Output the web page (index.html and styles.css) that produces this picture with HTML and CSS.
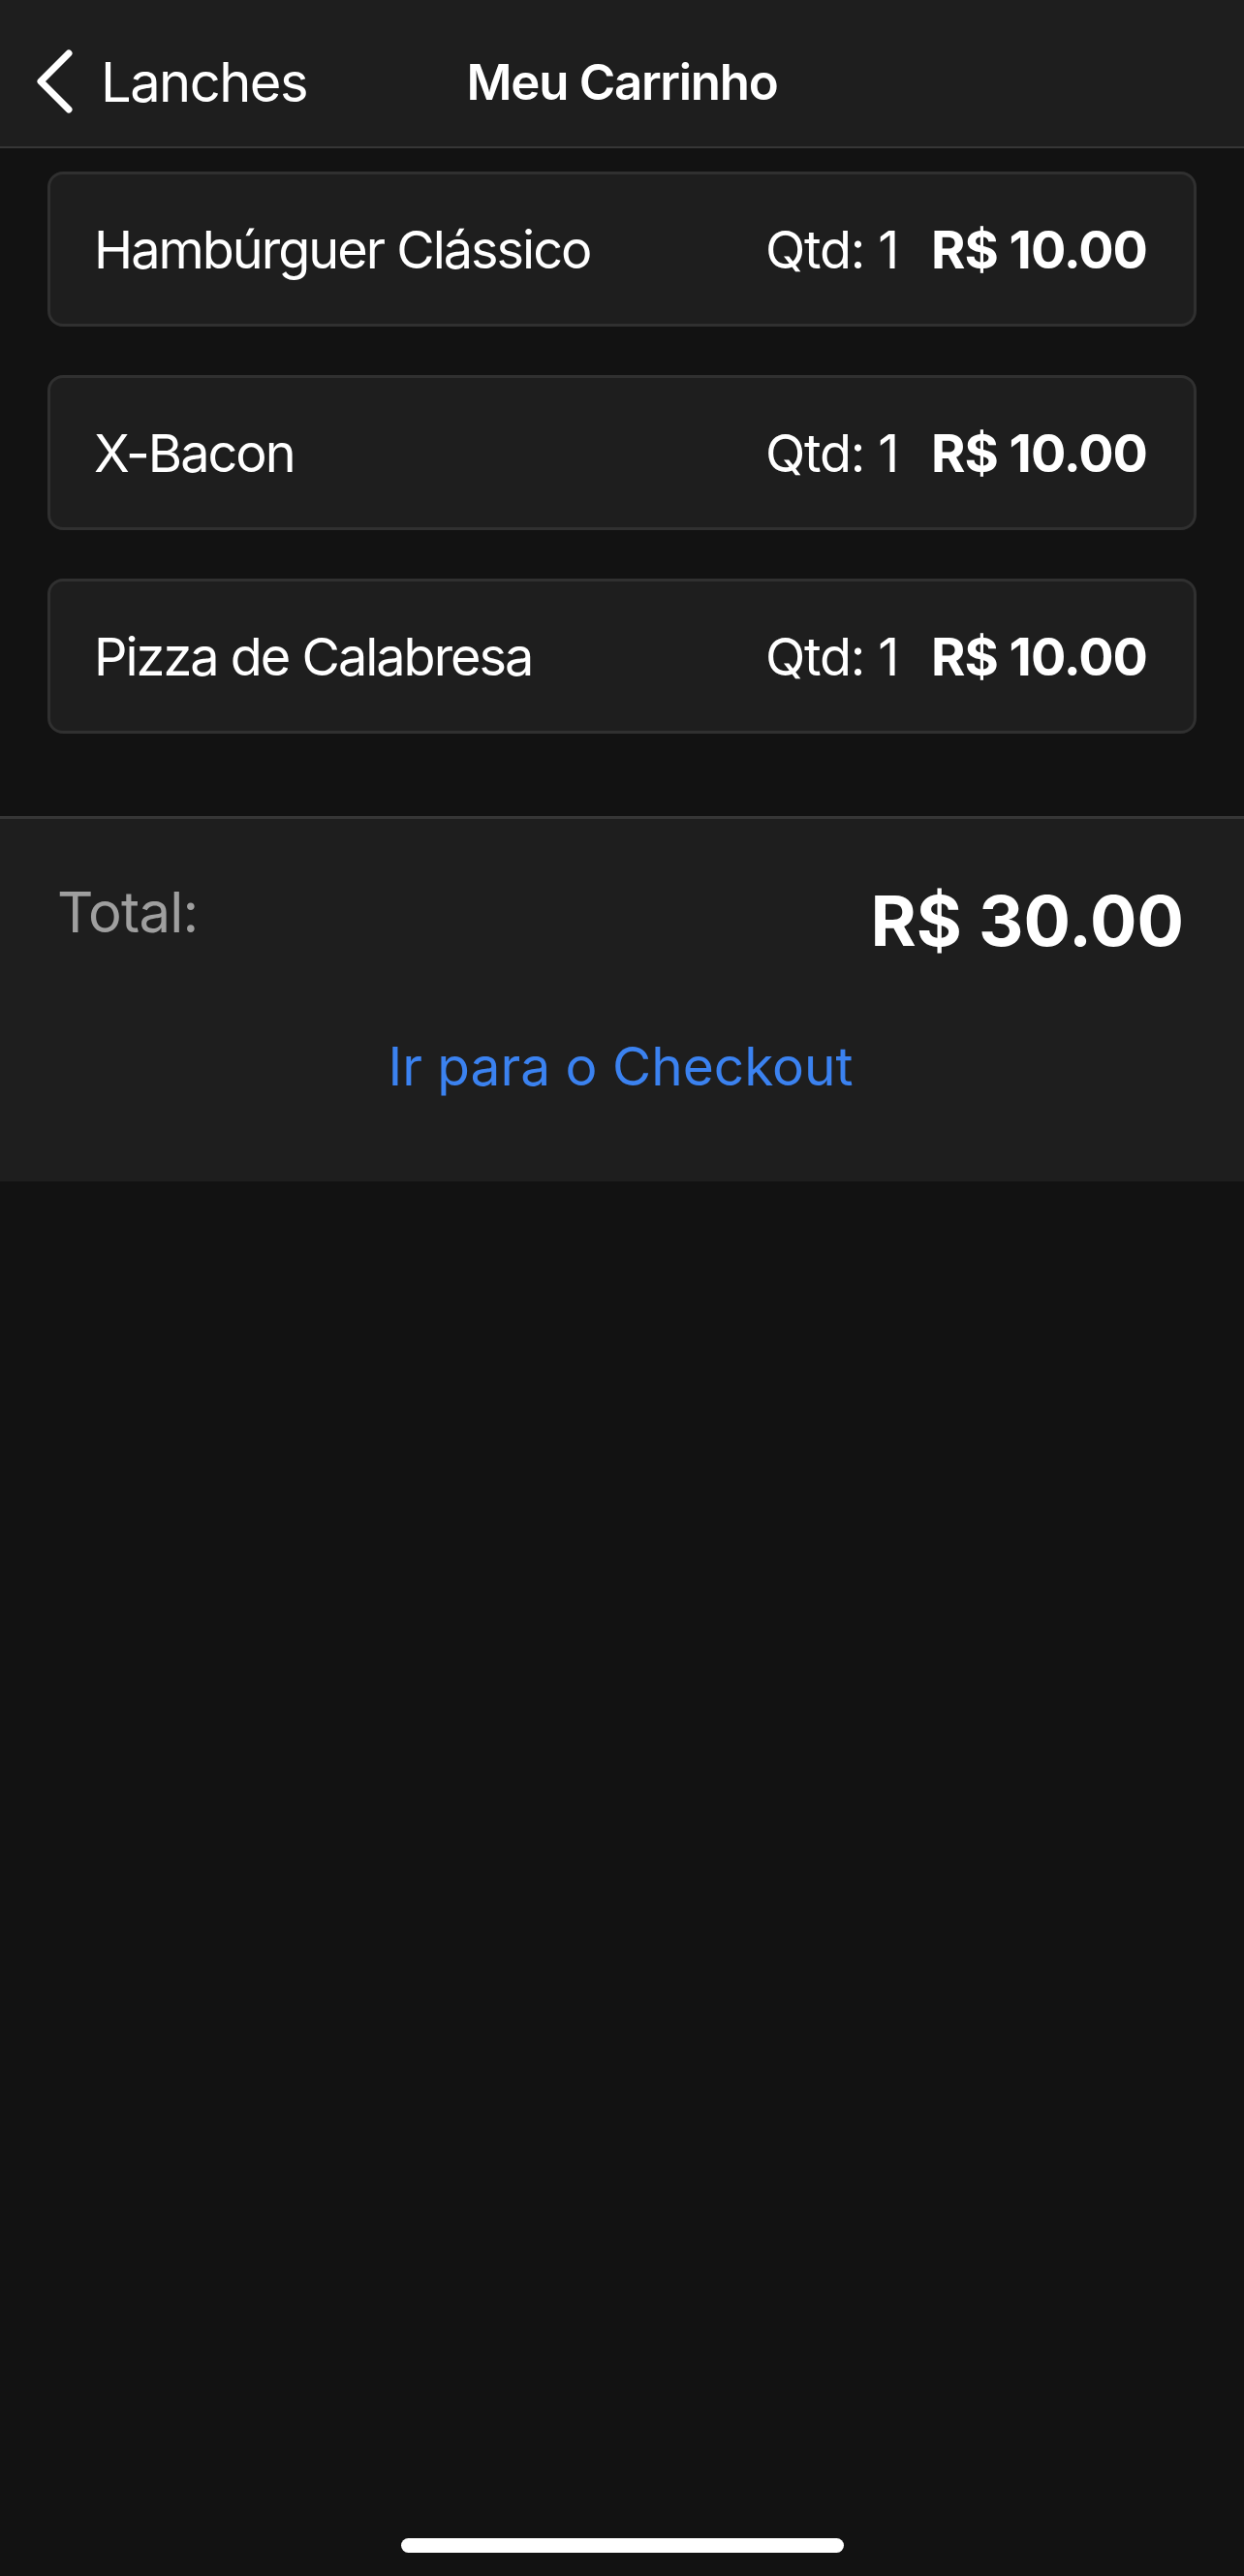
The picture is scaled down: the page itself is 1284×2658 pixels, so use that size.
FILE: index.html
```html
<!DOCTYPE html>
<html lang="pt-BR">
<head>
<meta charset="utf-8">
<title>Meu Carrinho</title>
<link rel="stylesheet" href="styles.css">
</head>
<body>
<div class="screen">
  <header class="navbar">
    <div class="nav-left">
      <a class="back" href="#">
        <svg class="chevron" viewBox="0 0 40 66" width="40" height="66" aria-hidden="true">
          <path d="M34 4 L5 33 L34 62" fill="none" stroke="#ffffff" stroke-width="7" stroke-linecap="round" stroke-linejoin="round"/>
        </svg>
        <span class="back-label">Lanches</span>
      </a>
    </div>
    <h1 class="nav-title">Meu Carrinho</h1>
    <div class="nav-right"></div>
  </header>

  <main class="cart-list">
    <div class="cart-item">
      <span class="item-name">Hambúrguer Clássico</span>
      <div class="item-meta">
        <span class="item-qty">Qtd: 1</span>
        <span class="item-price">R$ 10.00</span>
      </div>
    </div>
    <div class="cart-item">
      <span class="item-name">X-Bacon</span>
      <div class="item-meta">
        <span class="item-qty">Qtd: 1</span>
        <span class="item-price">R$ 10.00</span>
      </div>
    </div>
    <div class="cart-item">
      <span class="item-name">Pizza de Calabresa</span>
      <div class="item-meta">
        <span class="item-qty">Qtd: 1</span>
        <span class="item-price">R$ 10.00</span>
      </div>
    </div>
  </main>

  <section class="summary">
    <div class="total-row">
      <span class="total-label">Total:</span>
      <span class="total-value">R$ 30.00</span>
    </div>
    <button class="checkout" type="button">Ir para o Checkout</button>
  </section>

  <div class="spacer"></div>
  <div class="home-indicator"></div>
</div>
</body>
</html>
```

FILE: styles.css
```css
* { box-sizing: border-box; }

html, body {
  margin: 0;
  padding: 0;
  background: #121212;
}

body {
  font-family: Inter, "Noto Sans", "Liberation Sans", sans-serif;
  color: #ffffff;
}

.screen {
  min-height: 2658px;
  display: flex;
  flex-direction: column;
}

.navbar {
  height: 153px;
  background: #1e1e1e;
  border-bottom: 2px solid #363636;
  display: grid;
  grid-template-columns: 1fr auto 1fr;
  align-items: center;
  padding-top: 18px;
}

.nav-left {
  display: flex;
  align-items: center;
  padding-left: 37px;
}

.back {
  display: flex;
  align-items: center;
  gap: 27px;
  color: #ffffff;
  text-decoration: none;
}

.chevron {
  display: block;
  margin-top: -2px;
}

.back-label {
  font-size: 56px;
  font-weight: 400;
  letter-spacing: -1.5px;
}

.nav-title {
  margin: 0;
  font-size: 51px;
  font-weight: 600;
  letter-spacing: -1.3px;
  text-align: center;
}

.cart-list {
  display: flex;
  flex-direction: column;
  gap: 50px;
  padding: 24px 49px 85px;
}

.cart-item {
  height: 160px;
  background: #1e1e1e;
  border: 3px solid #303030;
  border-radius: 16px;
  display: flex;
  align-items: center;
  justify-content: space-between;
  padding: 0 48px 0 45px;
}

.item-name {
  font-size: 54px;
  font-weight: 400;
  letter-spacing: -2px;
}

.item-meta {
  display: flex;
  align-items: center;
  gap: 34px;
}

.item-qty {
  font-size: 54px;
  font-weight: 400;
  letter-spacing: -1.2px;
}

.item-price {
  font-size: 54px;
  font-weight: 700;
  letter-spacing: -1px;
}

.summary {
  background: #1e1e1e;
  border-top: 3px solid #363636;
  padding: 61px 62px 86px 59px;
  display: flex;
  flex-direction: column;
}

.total-row {
  display: flex;
  justify-content: space-between;
  align-items: flex-start;
}

.total-label {
  font-size: 58px;
  font-weight: 400;
  letter-spacing: -0.8px;
  color: #9f9f9f;
}

.total-value {
  font-size: 72px;
  line-height: 88px;
  font-weight: 700;
}

.checkout {
  margin-top: 73px;
  align-self: center;
  background: none;
  border: none;
  padding: 0;
  font-family: inherit;
  font-size: 55px;
  font-weight: 400;
  color: #3b82f0;
}

.spacer {
  flex: 1;
}

.home-indicator {
  align-self: center;
  width: 457px;
  height: 15px;
  border-radius: 8px;
  background: #ffffff;
  margin-bottom: 24px;
}
```
